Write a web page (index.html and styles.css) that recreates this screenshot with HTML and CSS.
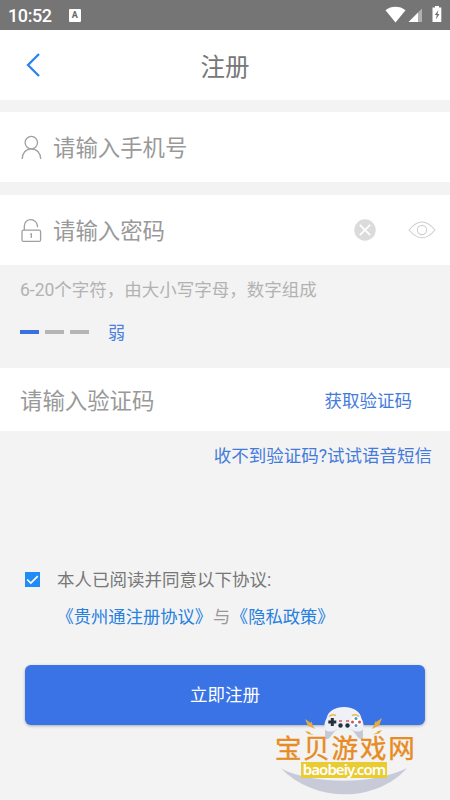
FILE: index.html
```html
<!DOCTYPE html>
<html lang="zh-CN">
<head>
<meta charset="utf-8">
<title>注册</title>
<link rel="stylesheet" href="styles.css">
</head>
<body>
<div class="screen">
  <div class="status">
    <span class="clock">10:52</span>
    <span class="app-badge">A</span>
    <svg class="signals" width="58" height="18" viewBox="0 0 58 18">
      <path fill="#fff" d="M0.5 4.2C6-.3 15-.3 20.500 4.200L10.500 16.500Z"/>
      <path fill="#b0b0b0" d="M37 2.500V16H33V6.500Z"/>
      <path fill="#fff" d="M33 6.500V16H23.500Z"/>
      <path fill="#fff" d="M50 0h4v1.500h2.300V16H47.500V1.500H50Z"/>
      <path fill="#737373" d="M53.500 4 49.700 9h2.100L50.900 13.500l3.600-5.400h-2Z"/>
    </svg>
  </div>
  <header class="header">
    <svg class="back" width="14" height="24" viewBox="0 0 14 24"><path d="M13 1 2 12l11 11" fill="none" stroke="#2b83ec" stroke-width="2.300"/></svg>
    <h1 class="title">注册</h1>
  </header>
  <div class="row phone">
    <svg class="lead" width="22" height="25" viewBox="0 0 22 25" fill="none" stroke="#a0a0a0" stroke-width="1.300"><circle cx="11.300" cy="7.600" r="6.200"/><path d="M2.200 24C2.200 18 5.800 13.900 11.300 13.900S20.700 18 20.700 24"/></svg>
    <span class="placeholder">请输入手机号</span>
  </div>
  <div class="row password">
    <svg class="lead" width="22" height="25" viewBox="0 0 22 25" fill="none" stroke="#a0a0a0" stroke-width="1.300"><rect x="2" y="12.200" width="18.600" height="11.200" rx="1.500"/><path d="M4.300 12V8.300C4.300-.7 17.500-.7 17.600 9.200M11.300 15.500v4.500M10.300 16h1.700"/></svg>
    <span class="placeholder">请输入密码</span>
    <svg class="clear" width="22" height="22" viewBox="0 0 22 22"><circle cx="11" cy="11" r="10.700" fill="#dbdbdb"/><path d="m5.800 5.800 10.400 10.400M16.200 5.800 5.800 16.200" stroke="#fff" stroke-width="1.700"/></svg>
    <svg class="eye" width="28" height="18" viewBox="0 0 28 18" fill="none" stroke="#cfcfcf" stroke-width="1.100"><path d="M1 9C6 3 10 1 14 1s8 2 13 8c-5 6-9 7.800-13 7.800S6 15 1 9Z"/><circle cx="14" cy="9" r="4.600"/></svg>
  </div>
  <p class="hint">6-20个字符，由大小写字母，数字组成</p>
  <div class="strength">
    <i class="bar on"></i><i class="bar"></i><i class="bar"></i>
    <span class="level">弱</span>
  </div>
  <div class="row code">
    <span class="placeholder">请输入验证码</span>
    <span class="get">获取验证码</span>
  </div>
  <p class="voice">收不到验证码?试试语音短信</p>
  <div class="agree">
    <svg class="check" width="15" height="15" viewBox="0 0 15 15"><path fill="#218cf5" d="M0 0h15v15H0z"/><path d="m2.200 7.500 3.600 3.600 7-7" fill="none" stroke="#fff" stroke-width="1.700"/></svg>
    <span class="agree-text">本人已阅读并同意以下协议:</span>
  </div>
  <p class="links"><a>《贵州通注册协议》</a><span class="and">与</span><a>《隐私政策》</a></p>
  <div class="submit">立即注册</div>
  <div class="mark">
    <svg class="mark-art" width="150" height="100" viewBox="0 0 150 100">
      <path fill="#c8cad7" d="M6 78.500C39 95 99 95 132 78C101 113 40 113 6 78.500Z" transform="translate(0 -5)"/>
      <path fill="#f0f1f6" d="M51.500 24C53 8 85 8 86.500 24Z"/>
      <path fill="#c5c8d5" d="M52 24c-2 6-2 14-2 20 4 2 7-5 10-8 5-3 13-3 18 0 3 3 6 10 10 8 0-6 0-14-2-20Z"/>
      <path fill="#eef0f5" d="M53 22c-4 3-5 13-1 14 7 2 7-2 17-2s10 4 17 2c4-1 3-11-1-14-9 2-23 2-32 0Z"/>
      <path d="M54 21.500q3-3 7-1M77 20.500q4-2 7 1" fill="none" stroke="#edb84d" stroke-width="1.500"/>
      <path d="M57.300 23v8M53.300 27h8" stroke="#25303e" stroke-width="3"/>
      <g fill="#25303e"><circle cx="65.500" cy="30.500" r="2.200"/><circle cx="72.500" cy="30.500" r="2.200"/></g>
      <path d="M64 26h3M71 26h3" stroke="#cf5560" stroke-width="1.300"/>
      <circle cx="81" cy="27" r="5.500" fill="#fff"/>
      <g fill="#d94c5c"><circle cx="77.500" cy="27" r="1.500"/><circle cx="84.500" cy="27" r="1.500"/></g>
      <g fill="#4a9db4"><circle cx="81" cy="23.500" r="1.500"/><circle cx="81" cy="30.500" r="1.500"/></g>
      <path fill="#e6aa42" d="m30 24 6 4 .5-2 1.500 5 2 3-6-3-.5 1ZM30 36l5 1v1l4 2-6-1-1-1ZM107 23l-6 4-.5-1-1.500 4-2 4 6-3 .5 1ZM107 35l-5 1.500v1l-4 2 6-1 1-1Z"/>
    </svg>
    <span class="mark-name">宝贝游戏网</span>
    <span class="mark-url">baobeiy.com</span>
  </div>
</div>
</body>
</html>
```

FILE: styles.css
```css
* { box-sizing: border-box; }
body { margin: 0; }
.screen {
  position: relative;
  width: 450px;
  height: 800px;
  overflow: hidden;
  background: #f3f3f3;
  color: #777;
  font-family: Roboto, "Noto Sans CJK SC", sans-serif;
  font-size: 17.5px;
}
p, h1 { margin: 0; font-weight: 400; }
.status {
  display: flex;
  align-items: center;
  height: 30px;
  padding: 0 7px 0 8px;
  background: #757575;
  color: #fff;
}
.clock { font-size: 18px; font-weight: 500; line-height: 30px; padding-top: 2px; letter-spacing: -.4px; }
.app-badge {
  width: 12px;
  height: 13px;
  margin-left: 17px;
  border-radius: 1px;
  background: #fff;
  color: #666;
  font-size: 9px;
  font-weight: 700;
  line-height: 13px;
  text-align: center;
}
.signals { margin-left: auto; }
.header {
  display: grid;
  grid-template-columns: 60px 1fr 60px;
  align-items: center;
  height: 70px;
  background: #fff;
}
.back { margin-left: 26px; }
.title { text-align: center; font-size: 24.5px; line-height: 36px; padding-top: 5px; }
.row { display: flex; align-items: center; background: #fff; padding-left: 20px; }
.phone { height: 70px; margin-top: 12px; }
.password { height: 70px; margin-top: 13px; }
.lead { margin-right: 11px; }
.placeholder { font-size: 22.4px; line-height: 32px; padding-top: 2px; color: #999; }
.clear { margin-left: auto; }
.eye { margin: 0 14px 0 32px; }
.hint { height: 50px; padding-left: 20px; font-size: 17.5px; line-height: 51px; color: #b2b2b2; }
.strength { display: flex; align-items: center; gap: 6px; height: 53px; padding: 0 0 19px 20px; }
.bar { width: 19px; height: 4px; background: #b5b5b5; }
.bar.on { background: #3972e0; }
.level { margin-left: 13px; font-size: 17px; line-height: 24px; padding-top: 1px; color: #4a7fdd; }
.code { height: 63px; justify-content: space-between; padding-right: 38px; }
.get, .voice { color: #447bdb; }
.voice { height: 48px; padding-right: 18px; text-align: right; line-height: 50px; }
.agree { display: flex; align-items: center; gap: 17px; height: 26px; margin-top: 88px; padding-left: 25px; }
.agree-text { padding-bottom: 3px; }
.check { margin-bottom: 1px; }
.links { padding-left: 56.500px; margin-top: 10px; font-size: 17.3px; line-height: 28px; height: 26px; color: #999; }
.links a { color: #2580df; }
.and { margin: 0 .5px 0 1px; }
.submit {
  height: 60px;
  margin: 36px 25px 0;
  border-radius: 6px;
  background: #3973e6;
  box-shadow: 0 1px 3px rgba(0, 0, 0, .3);
  color: #fff;
  line-height: 60px;
  text-align: center;
}
.mark { position: absolute; left: 275px; top: 695px; width: 150px; height: 100px; }
.mark-art { display: block; }
.mark-name {
  position: absolute;
  left: 0;
  top: 41px;
  font-size: 26.5px;
  line-height: 26px;
  letter-spacing: 1.8px;
  color: #e78b22;
  white-space: nowrap;
  -webkit-text-stroke: .4px #e78b22;
}
.mark-url {
  position: absolute;
  left: 26px;
  top: 67px;
  width: 86px;
  height: 16px;
  background: #e9cb32;
  color: #fff;
  font: 600 15px/15px "Noto Sans", sans-serif;
  letter-spacing: -.95px;
  text-align: center;
}
```
